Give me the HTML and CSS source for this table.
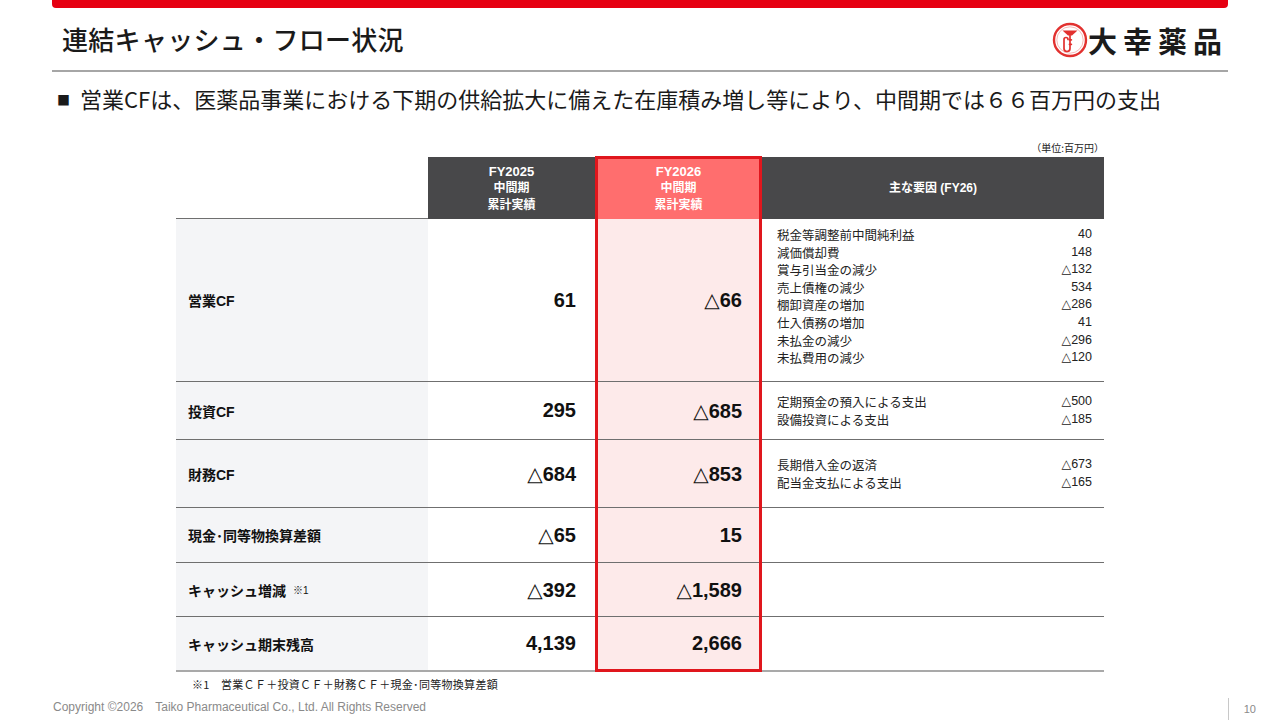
FILE: index.html
```html
<!DOCTYPE html>
<html lang="ja">
<head>
<meta charset="utf-8">
<title>連結キャッシュ・フロー状況</title>
<link rel="stylesheet" href="styles.css">
</head>
<body>
<div class="slide">
  <div class="topbar"></div>
  <header class="head">
    <h1 class="title">連結キャッシュ・フロー状況</h1>
    <div class="logo">
      <svg class="logo-mark" viewBox="0 0 36 36" width="36" height="36" aria-hidden="true">
        <circle cx="18" cy="18" r="16" fill="#fff" stroke="#e2312f" stroke-width="2.4"/>
        <circle cx="18" cy="18" r="13.2" fill="none" stroke="#f2a8a6" stroke-width="0.8"/>
        <path d="M10.5 8.5 L25.5 8.5 L20 13.5 L16 13.5 Z" fill="#e2312f"/>
        <path d="M18 13.5 V26.5 a3 3 0 0 1 -6 0 V17.5 a2 2 0 0 1 4 0" fill="none" stroke="#e2312f" stroke-width="1.7" stroke-linecap="round"/>
        <rect x="16.6" y="17" width="3.6" height="1.8" rx="0.8" fill="#e2312f"/>
        <rect x="16.6" y="21.5" width="3.6" height="1.8" rx="0.8" fill="#e2312f"/>
      </svg>
      <span class="logo-text">大幸薬品</span>
    </div>
  </header>
  <div class="rule"></div>

  <p class="lead"><span class="sq">■</span>営業CFは、医薬品事業における下期の供給拡大に備えた在庫積み増し等により、中間期では６６百万円の支出</p>

  <div class="unit">（単位:百万円）</div>

  <div class="cf-table">
    <div class="hd hd-blank"></div>
    <div class="hd hd-dark"><b>FY2025</b><span>中間期</span><span>累計実績</span></div>
    <div class="hd hd-pink"><b>FY2026</b><span>中間期</span><span>累計実績</span></div>
    <div class="hd hd-dark hd-wide">主な要因 (FY26)</div>

    <div class="lbl">営業CF</div>
    <div class="num">61</div>
    <div class="num hl">△66</div>
    <div class="det">
      <div class="it"><span>税金等調整前中間純利益</span><span>40</span></div>
      <div class="it"><span>減価償却費</span><span>148</span></div>
      <div class="it"><span>賞与引当金の減少</span><span>△132</span></div>
      <div class="it"><span>売上債権の減少</span><span>534</span></div>
      <div class="it"><span>棚卸資産の増加</span><span>△286</span></div>
      <div class="it"><span>仕入債務の増加</span><span>41</span></div>
      <div class="it"><span>未払金の減少</span><span>△296</span></div>
      <div class="it"><span>未払費用の減少</span><span>△120</span></div>
    </div>

    <div class="lbl">投資CF</div>
    <div class="num">295</div>
    <div class="num hl">△685</div>
    <div class="det det-in">
      <div class="it"><span>定期預金の預入による支出</span><span>△500</span></div>
      <div class="it"><span>設備投資による支出</span><span>△185</span></div>
    </div>

    <div class="lbl">財務CF</div>
    <div class="num">△684</div>
    <div class="num hl">△853</div>
    <div class="det det-in">
      <div class="it"><span>長期借入金の返済</span><span>△673</span></div>
      <div class="it"><span>配当金支払による支出</span><span>△165</span></div>
    </div>

    <div class="lbl">現金･同等物換算差額</div>
    <div class="num">△65</div>
    <div class="num hl">15</div>
    <div class="det"></div>

    <div class="lbl">キャッシュ増減<small class="mark">※1</small></div>
    <div class="num">△392</div>
    <div class="num hl">△1,589</div>
    <div class="det"></div>

    <div class="lbl last">キャッシュ期末残高</div>
    <div class="num last">4,139</div>
    <div class="num hl last">2,666</div>
    <div class="det last"></div>

    <div class="hl-frame"></div>
  </div>

  <p class="note">※1　営業ＣＦ＋投資ＣＦ＋財務ＣＦ＋現金･同等物換算差額</p>

  <footer class="foot">
    <span class="copy">Copyright ©2026　Taiko Pharmaceutical Co., Ltd. All Rights Reserved</span>
    <span class="page">10</span>
  </footer>
</div>
</body>
</html>
```

FILE: styles.css
```css
* { box-sizing: border-box; }
html, body { margin: 0; padding: 0; background: #fff; }
body {
  width: 1280px;
  height: 720px;
  overflow: hidden;
  font-family: "Liberation Sans", "Noto Sans CJK JP", sans-serif;
  color: #1a1a1a;
}
.slide {
  width: 1280px;
  height: 720px;
  display: flex;
  flex-direction: column;
}
.topbar {
  margin: 0 52px;
  height: 8px;
  background: #e60012;
  border-radius: 0 0 4px 4px;
}
.head {
  margin: 0 52px;
  height: 63px;
  display: flex;
  align-items: center;
  justify-content: space-between;
}
.title {
  margin: 0 0 0 10px;
  font-family: "Noto Sans CJK JP", sans-serif;
  font-size: 26px;
  font-weight: 500;
  line-height: 34px;
  color: #1a1a1a;
  letter-spacing: 0.3px;
}
.logo {
  display: flex;
  align-items: center;
  margin-right: 6px;
  margin-top: 2px;
}
.logo-mark { display: block; margin-right: 0; }
.logo-text {
  font-family: "Noto Sans CJK JP", sans-serif;
  font-weight: 700;
  font-size: 29px;
  line-height: 34px;
  letter-spacing: 6px;
  margin-right: -6px;
  color: #1b1b1b;
}
.rule {
  margin: 0 52px;
  height: 2px;
  background: #a6a6a6;
}
.lead {
  margin: 12px 0 0 57px;
  font-family: "Noto Sans CJK JP", sans-serif;
  font-size: 22px;
  line-height: 28px;
  color: #1a1a1a;
  white-space: nowrap;
}
.lead .sq {
  font-size: 13px;
  vertical-align: 3px;
  margin-right: 10px;
}
.unit {
  margin: 28px 176px 0 0;
  align-self: flex-end;
  font-family: "Noto Sans CJK JP", sans-serif;
  font-size: 10px;
  line-height: 12px;
  color: #222;
}
.cf-table {
  position: relative;
  margin: 3px 0 0 176px;
  width: 928px;
  display: grid;
  grid-template-columns: 252px 167px 167px 342px;
  grid-template-rows: 62px 163px 58px 68px 55px 54px 55px;
}
.hd {
  display: flex;
  flex-direction: column;
  align-items: center;
  justify-content: center;
  color: #fff;
  font-weight: 700;
  font-size: 12px;
  line-height: 17px;
}
.hd b { font-size: 13px; }
.hd-blank { background: #fff; border-bottom: 1px solid #6f6f6f; }
.hd-dark { background: #48484a; }
.hd-pink { background: #ff6e6e; }
.lbl, .num, .det {
  border-bottom: 1px solid #6f6f6f;
  display: flex;
  align-items: center;
}
.lbl {
  background: #f4f5f7;
  padding-left: 12px;
  font-weight: 700;
  font-size: 14px;
  color: #111;
}
.lbl .mark {
  font-size: 10px;
  font-weight: 400;
  margin-left: 7px;
}
.num {
  justify-content: flex-end;
  padding-right: 19px;
  font-family: "Liberation Sans", "DejaVu Sans", sans-serif;
  font-weight: 700;
  font-size: 20px;
  color: #111;
}
.num.hl {
  background: #fdeaea;
  padding-right: 20px;
}
.det {
  flex-direction: column;
  align-items: stretch;
  justify-content: flex-start;
  padding: 7px 12px 0 15px;
  font-size: 12.5px;
  line-height: 17.6px;
  color: #222;
}
.det-in { justify-content: center; padding-top: 0; }
.it {
  display: flex;
  justify-content: space-between;
}
.it span:first-child { font-family: "Noto Sans CJK JP", sans-serif; font-size: 12.5px; }
.it span:last-child { font-family: "Liberation Sans", "DejaVu Sans", sans-serif; }
.last { border-bottom: 2px solid #a9a9a9; }
.hl-frame {
  position: absolute;
  left: 419px;
  top: -1px;
  width: 167px;
  bottom: 0;
  border: 3px solid #e0161d;
  pointer-events: none;
}
.note {
  margin: 5px 0 0 192px;
  font-family: "Noto Sans CJK JP", sans-serif;
  font-size: 11px;
  line-height: 15px;
  color: #222;
  letter-spacing: 0.3px;
}
.foot {
  margin: 2px 24px 0 53px;
  display: flex;
  justify-content: space-between;
  align-items: center;
}
.copy {
  font-size: 12px;
  line-height: 16px;
  color: #8a8a8a;
}
.page {
  border-left: 1px solid #c8c8c8;
  padding-left: 15px;
  height: 22px;
  line-height: 22px;
  margin-top: 4px;
  font-size: 11px;
  color: #8a8a8a;
}
```
